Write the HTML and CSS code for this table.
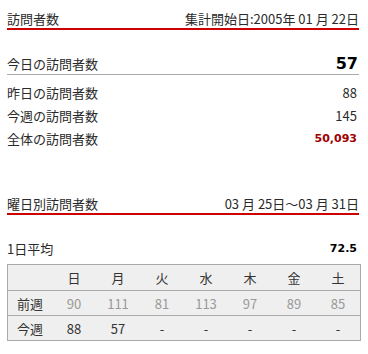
FILE: index.html
```html
<!DOCTYPE html>
<html lang="ja">
<head>
<meta charset="utf-8">
<link rel="stylesheet" href="styles.css">
</head>
<body>
<div class="wrap">
  <div class="sec-head">
    <span>訪問者数</span>
    <span>集計開始日:2005年 01 月 22日</span>
  </div>
  <div class="today">
    <span>今日の訪問者数</span>
    <span class="big">57</span>
  </div>
  <div class="rows">
    <div class="row"><span>昨日の訪問者数</span><span>88</span></div>
    <div class="row"><span>今週の訪問者数</span><span>145</span></div>
    <div class="row"><span>全体の訪問者数</span><span class="total">50,093</span></div>
  </div>
  <div class="sec-head sec2">
    <span>曜日別訪問者数</span>
    <span>03 月 25日～03 月 31日</span>
  </div>
  <div class="row avg"><span>1日平均</span><span class="bold">72.5</span></div>
  <table class="week">
    <tr class="head"><td></td><td>日</td><td>月</td><td>火</td><td>水</td><td>木</td><td>金</td><td>土</td></tr>
    <tr class="prev"><td class="lbl">前週</td><td>90</td><td>111</td><td>81</td><td>113</td><td>97</td><td>89</td><td>85</td></tr>
    <tr class="cur"><td class="lbl">今週</td><td>88</td><td>57</td><td>-</td><td>-</td><td>-</td><td>-</td><td>-</td></tr>
  </table>
</div>
</body>
</html>
```
FILE: styles.css
```css
html, body { margin: 0; padding: 0; background: #fff; }
body {
  font-family: "Noto Sans CJK JP", "Noto Sans", sans-serif;
  font-size: 13px;
  color: #2a2a2a;
}
.wrap { width: 352px; padding: 10px 0 0 7px; }
.sec-head {
  display: flex;
  justify-content: space-between;
  align-items: center;
  height: 18px;
  line-height: 18px;
  border-bottom: 2px solid #cc0000;
}
.today {
  display: flex;
  justify-content: space-between;
  align-items: flex-end;
  margin-top: 21px;
  height: 24px;
  border-bottom: 1px solid #aaa;
  line-height: 18px;
  padding-bottom: 1px;
  box-sizing: border-box;
}
.big {
  font-family: "DejaVu Sans", sans-serif;
  font-weight: bold;
  font-size: 16px;
  color: #000;
  line-height: 18px;
  margin-right: 1px;
}
.rows { margin-top: 6px; }
.row {
  display: flex;
  justify-content: space-between;
  align-items: center;
  height: 23px;
  line-height: 23px;
}
.row span:last-child { margin-right: 2px; }
.total {
  font-family: "DejaVu Sans", sans-serif;
  font-weight: bold;
  font-size: 11px;
  color: #a00000;
}
.bold {
  font-family: "DejaVu Sans", sans-serif;
  font-weight: bold;
  font-size: 11px;
  color: #000;
}
.sec2 { margin-top: 45px; }
.avg { margin-top: 22px; }
.week {
  margin-top: 4px;
  width: 352px;
  border-collapse: collapse;
  table-layout: fixed;
  background: #efefef;
  border: 1px solid #aaa;
}
.week td {
  width: 44px;
  text-align: center;
  padding: 0;
  height: 24px;
  border-top: 1px solid #aaa;
}
.week .head td { height: 25px; color: #333; }
.week .prev td { color: #999; }
.week .cur td { color: #333; }
.week td.lbl { color: #333; }
```
